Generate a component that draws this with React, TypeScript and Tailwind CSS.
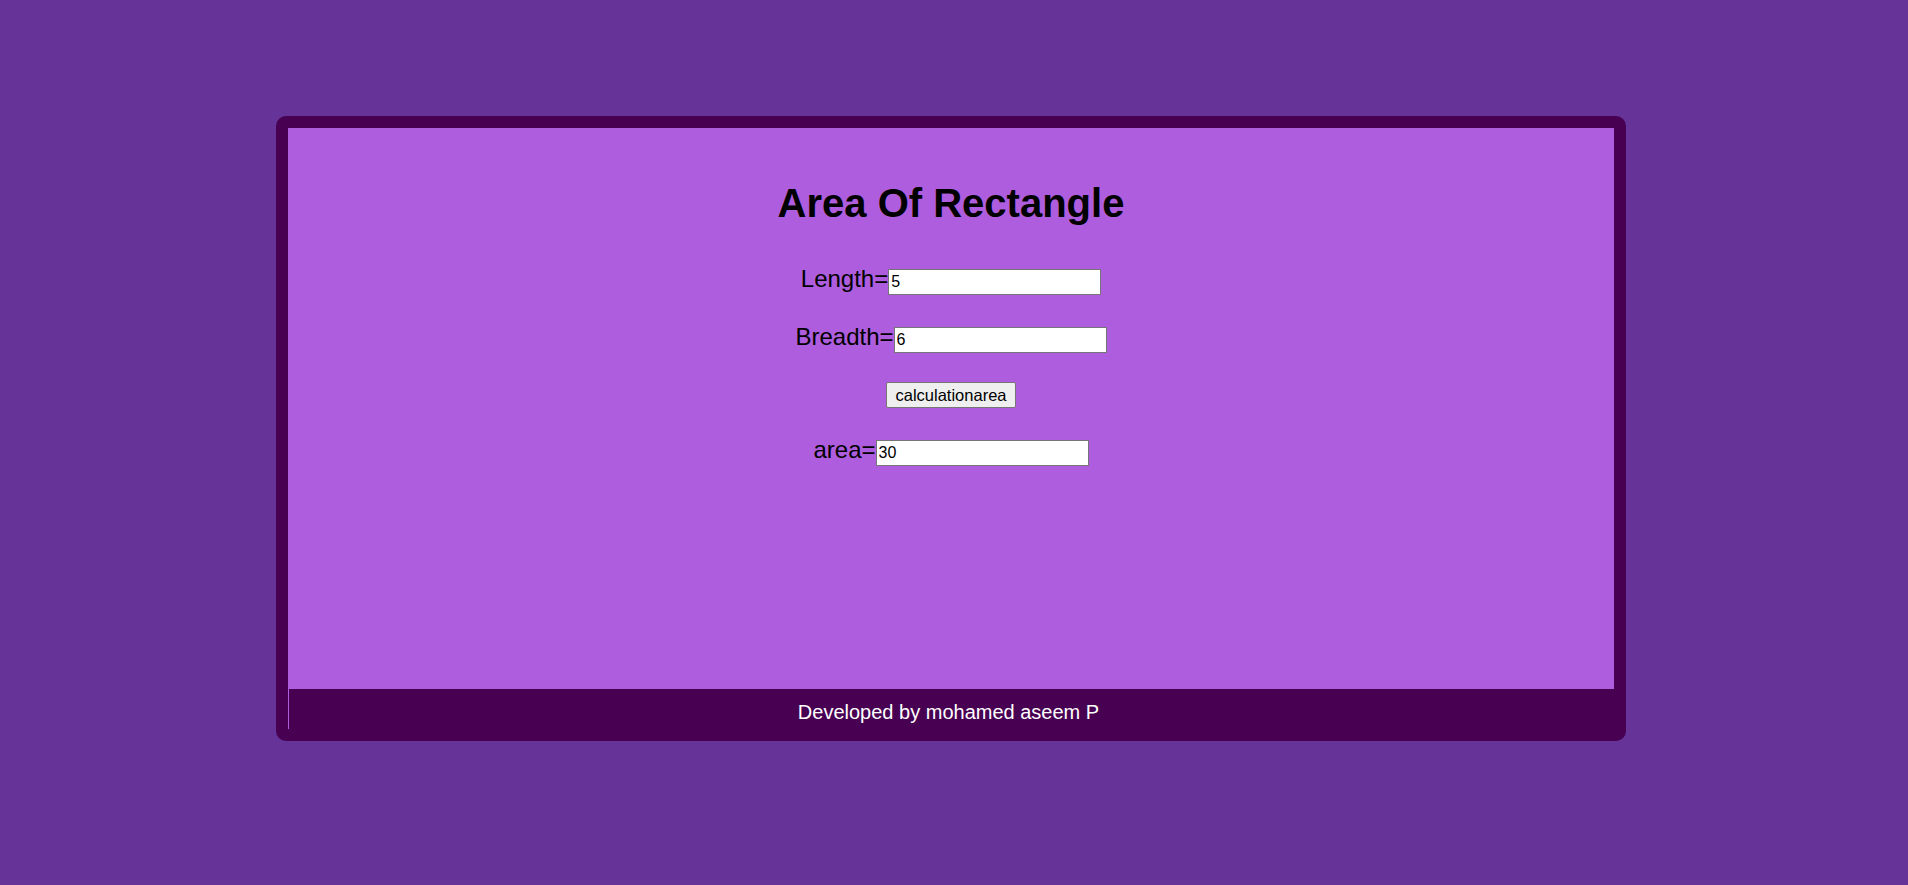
import { useState } from 'react'

const font = { fontFamily: '"Liberation Sans", Arial, sans-serif' }

function Field({ label, value, onChange }: { label: string; value: string; onChange?: (v: string) => void }) {
  return (
    <div className="flex items-baseline justify-center">
      <span className="text-[24px] leading-normal text-black">{label}=</span>
      <input
        className="w-[213px] h-[26px] border border-[#767676] bg-white px-[2px] text-[16px] text-black outline-none"
        value={value}
        onChange={(e) => onChange?.(e.target.value)}
      />
    </div>
  )
}

export default function App() {
  const [length, setLength] = useState('5')
  const [breadth, setBreadth] = useState('6')
  const [area, setArea] = useState('30')

  const calc = () => setArea(String(Number(length) * Number(breadth)))

  return (
    <div className="min-h-screen bg-[#663399] pt-[116px]" style={font}>
      {/* Card */}
      <div className="ml-[276px] w-[1350px] h-[625px] rounded-[10px] bg-[#470052] p-[12px] flex flex-col">
        {/* Body */}
        <div className="h-[561px] bg-[#ae5ddf] flex flex-col items-center pt-[52px]">
          <h1 className="text-[40px] leading-[46px] font-bold text-black">Area Of Rectangle</h1>

          <div className="mt-[35px]">
            <Field label="Length" value={length} onChange={setLength} />
          </div>
          <div className="mt-[22px]">
            <Field label="Breadth" value={breadth} onChange={setBreadth} />
          </div>

          <button
            onClick={calc}
            className="mt-[27px] w-[130px] h-[26px] rounded-[2px] border border-[#767676] bg-[#efefef] text-[16.5px] leading-none text-black"
          >
            calculationarea
          </button>

          <div className="mt-[24px]">
            <Field label="area" value={area} onChange={setArea} />
          </div>
        </div>

        {/* Footer */}
        <div className="h-[40px] border-l border-[#ae5ddf] pt-[8px] pr-[6px] text-center text-[20px] leading-normal text-white">
          Developed by mohamed aseem P
        </div>
      </div>
    </div>
  )
}
